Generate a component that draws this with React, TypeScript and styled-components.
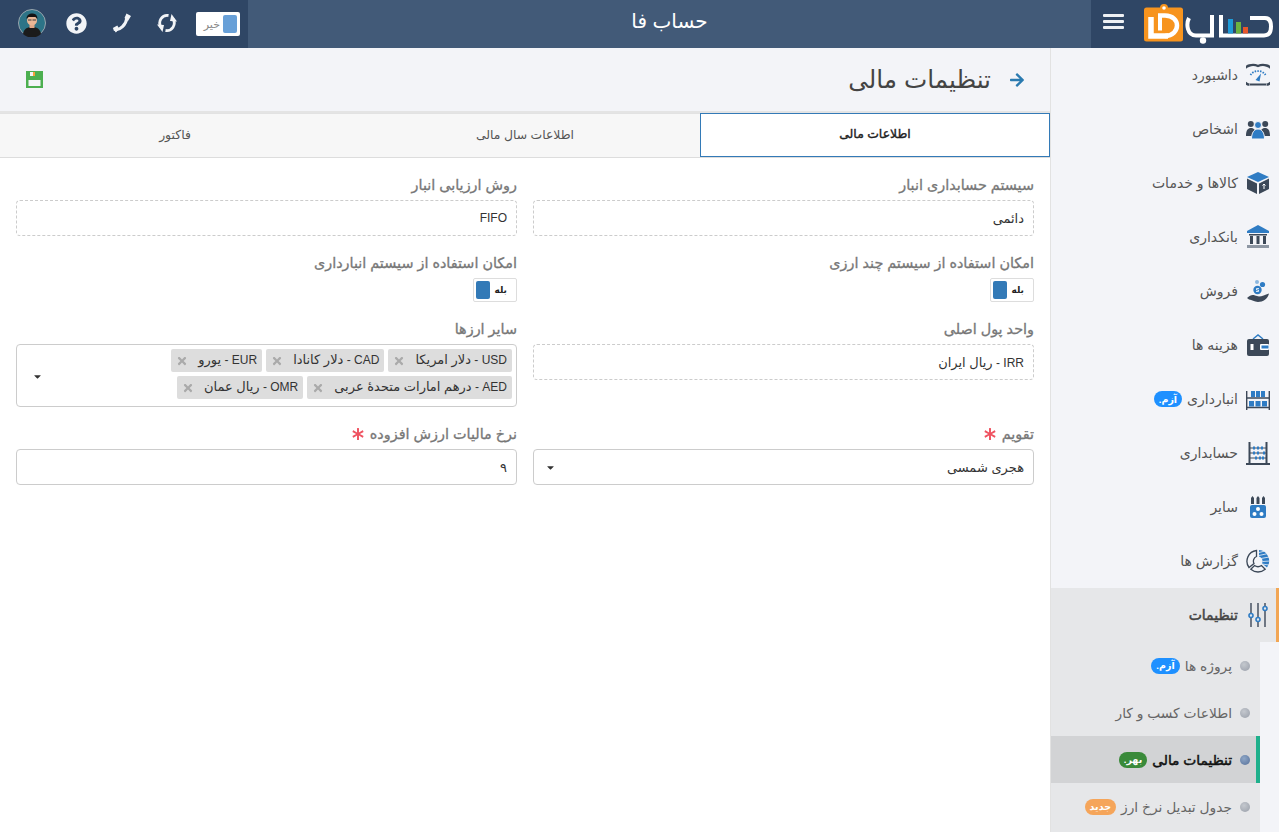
import React from "react";
import styled, { createGlobalStyle } from "styled-components";
import { FaArrowRight, FaAsterisk, FaCaretDown, FaQuestionCircle, FaTimes } from "react-icons/fa";

const Global = createGlobalStyle`
  html, body { margin: 0; padding: 0; background: #fff; overflow: hidden; }
  * { box-sizing: border-box; }
  body { font-family: "Liberation Sans", "DejaVu Sans", sans-serif; font-size: 12px; color: #333; }
`;

const Shell = styled.div`width: 1279px; height: 832px; overflow: hidden; display: flex; flex-direction: column;`;
const TopBar = styled.header`height: 48px; flex: none; display: flex; background: #425a78; color: #fff;`;
const Brand = styled.div`width: 188px; background: #2f4665; display: flex; align-items: center; padding: 0 6px 0 0; gap: 20px;`;
const BarsButton = styled.div`width: 21px; height: 15px; margin-bottom: 5px; display: flex; flex-direction: column; justify-content: space-between;
  & > i { display: block; height: 3px; border-radius: 1px; background: #eef1f4; }`;
const PageName = styled.div`flex: 1; text-align: center; font-size: 20px; line-height: 42px;`;
const Tools = styled.div`width: 248px; background: #2f4665; display: flex; align-items: center; padding-right: 8px; padding-bottom: 2px;`;
const ToolSlot = styled.div`width: 45px; display: flex; align-items: center; justify-content: center; color: #f2f4f7; font-size: 21px;`;
const OffSwitch = styled.div`width: 44px; height: 24px; margin-left: 7px; margin-top: 2px; background: #fff; border-radius: 2px; display: flex; align-items: center; padding: 0 3px; gap: 3px; font-size: 11px; color: #888;
  & > i { width: 14px; height: 18px; background: #68a0d8; border-radius: 2px; flex: none; }`;

const Body = styled.div`flex: 1; display: flex; min-height: 0;`;
const Sidebar = styled.nav`width: 229px; flex: none; background: #f3f4f8; border-left: 1px solid #e2e2e2;`;
const MenuItem = styled.div<{ $open?: boolean }>`height: 54px; display: flex; align-items: center; gap: 8px; padding-right: ${p => (p.$open ? "6px" : "9px")}; color: ${p => (p.$open ? "#444" : "#555")}; font-size: 14px; -webkit-text-stroke: ${p => (p.$open ? "0.5px" : "0")};
  background: ${p => (p.$open ? "#e6e7e9" : "transparent")}; border-right: ${p => (p.$open ? "3px solid #f2a654" : "0 solid transparent")};
  & > svg { width: 24px; height: 24px; flex: none; }`;
const SubMenu = styled.div`width: 209px; margin-right: 19px; background: #e6e7e9; height: 190px;`;
const SubItem = styled.div<{ $active?: boolean }>`height: 47px; display: flex; align-items: center; gap: 8px; padding-right: ${p => (p.$active ? "6px" : "10px")}; font-size: 13.800px; -webkit-text-stroke: ${p => (p.$active ? "0.5px" : "0")}; color: ${p => (p.$active ? "#111" : "#666")}; background: ${p => (p.$active ? "#d2d3d5" : "transparent")}; border-right: ${p => (p.$active ? "4px solid #1fb08c" : "0 solid transparent")};`;
const Dot = styled.i<{ $active?: boolean }>`width: 10px; height: 10px; border-radius: 50%; flex: none; background: radial-gradient(circle at 40% 35%, ${p => (p.$active ? "#8ea6c6, #56709a" : "#c4c8ce, #989ea9")});`;
const Pill = styled.span<{ $tone: string }>`display: inline-flex; align-items: center; justify-content: center; height: 16px; padding: 0 5px; margin-right: -3px; border-radius: 8px; background: ${p => p.$tone}; color: #fff; font-size: 9.500px; font-weight: 700; -webkit-text-stroke: 0;`;

const Main = styled.main`flex: 1; min-width: 0; background: #fff;`;
const PageHead = styled.div`height: 65px; background: #f3f4f8; border-bottom: 2px solid #e4e4e4; display: flex; align-items: center; padding: 0 25px 0 8px; justify-content: space-between;`;
const HeadTitle = styled.h1`margin: 0; display: flex; align-items: center; gap: 18px; font-size: 24.700px; font-weight: 400; color: #444;
  & > svg { color: #2a7ab0; font-size: 16px; }`;
const SaveButton = styled.div`width: 52px; display: flex; justify-content: center;`;
const Tabs = styled.div`display: grid; grid-template-columns: repeat(3, 1fr); height: 45px; border-bottom: 1px solid #ddd; background: #f7f7f7;`;
const Tab = styled.div<{ $active?: boolean }>`display: flex; align-items: center; justify-content: center; padding-bottom: 3px; font-size: 12.400px; -webkit-text-stroke: ${p => (p.$active ? "0.4px" : "0")}; color: ${p => (p.$active ? "#222" : "#555")}; background: ${p => (p.$active ? "#fff" : "transparent")}; border: 1px solid ${p => (p.$active ? "#337ab7" : "#e2e2e2")}; ${p => !p.$active && "border-width: 1px 0 0 0;"}`;
const Form = styled.div`display: grid; grid-template-columns: 1fr 1fr; column-gap: 16px; row-gap: 19px; padding: 19px 16px 0;`;
const Field = styled.div`display: flex; flex-direction: column; gap: 3px; align-items: stretch; min-width: 0;`;
const Label = styled.label`height: 20px; padding-bottom: 4px; font-size: 14.400px; -webkit-text-stroke: 0.3px; color: #777; display: flex; align-items: center; gap: 6px;
  & > svg { color: #ef5361; font-size: 12px; -webkit-text-stroke: 0; }`;
const TextBox = styled.div<{ $dashed?: boolean }>`height: 36px; padding: 0 9px; display: flex; align-items: center; justify-content: space-between; border: 1px ${p => (p.$dashed ? "dashed" : "solid")} #ccc; border-radius: 4px; font-size: 13px; color: #333; background: #fff;`;
const Latin = styled.span`font-size: 12px;`;
const Caret = styled.span`display: flex; color: #333; font-size: 11px; margin-left: 2px; margin-top: 1px;`;
const MultiBox = styled.div`height: 63px; border: 1px solid #ccc; border-radius: 4px; padding: 0 4px 0 13px; display: flex; align-items: center; gap: 8px; background: #fff;`;
const TagWrap = styled.div`flex: 1; display: flex; flex-wrap: wrap; gap: 4px; align-content: flex-start; height: 53px;`;
const Tag = styled.span`height: 23px; display: inline-flex; align-items: center; padding: 0 5px 2px; gap: 10px; background: #ddd; border-radius: 2px; font-size: 13px; color: #333; white-space: nowrap;
  & > svg { color: #aaa; font-size: 12px; margin-top: 2px; }`;
const SwitchRow = styled.div`display: flex;`;
const OnSwitch = styled.div`width: 44px; height: 24px; border: 1px solid #ddd; border-radius: 2px; background: #fff; display: flex; align-items: center; justify-content: space-between; padding: 0 9px 0 2px; font-size: 9px; font-weight: 700; color: #222;
  & > i { width: 14px; height: 18px; background: #337ab7; border-radius: 2px; }`;

const D = "#3c4858", B = "#2f7cc4", BG = "#f3f4f8";
const Gauge = () => <svg viewBox="0 0 24 24"><path d="M3.500 21.500H2A11 10 0 0 1 12 3a11 10 0 0 1 10 18.500h-1.500" fill="none" stroke={D} strokeWidth="2.400" /><path d="M4.500 12A8.500 7.500 0 0 1 19.500 12" fill="none" stroke={B} strokeWidth="1.800" strokeDasharray="1.500 1.200" /><path d="M9.500 17l5.500-6.500-1.500 8z" fill={B} /><rect x="4" y="20.500" width="16" height="2" fill={D} /></svg>;
const People = () => <svg viewBox="0 0 24 24"><circle cx="4.800" cy="7" r="3" fill={D} /><circle cx="19.200" cy="7" r="3" fill={D} /><path d="M0 19c0-6 2-8 5-8s5 2 5 8zM14 19c0-6 2-8 5-8s5 2 5 8z" fill={D} /><circle cx="12" cy="8" r="3.500" fill={B} stroke={BG} /><path d="M5.500 22c0-6 2.500-10 6.500-10s6.500 4 6.500 10z" fill={B} stroke={BG} /></svg>;
const BoxIcon = () => <svg viewBox="0 0 24 24"><path d="M1 6l11-5 11 5-11 5z" fill={B} /><path d="M1 7.500l10 5V23L1 18z" fill={D} /><path d="M23 7.500l-10 5V23l10-5z" fill={D} /><path d="M18 18v-5m-1.500 1.500L18 13l1.500 1.500" stroke="#fff" fill="none" /></svg>;
const Bank = () => <svg viewBox="0 0 24 24"><path d="M12 0l11 6v2H1V6z" fill={B} /><rect x="3" y="9" width="18" height="1.500" fill={D} /><path d="M4 11h3v8H4zM10.500 11h3v8h-3zM17 11h3v8h-3z" fill={D} /><rect x="1" y="20" width="22" height="3" fill="#8d96a3" /></svg>;
const Coins = () => <svg viewBox="0 0 24 24"><circle cx="11.500" cy="11" r="4.200" fill={B} /><path d="M13 9.500h-2.500v1.500h2v1.500H10" fill="none" stroke="#fff" strokeWidth=".800" /><circle cx="16.500" cy="5.500" r="2.600" fill={B} /><circle cx="11" cy="3" r="2" fill="#8cb7e0" /><path d="M1 19c3-2.500 5-3.500 8-2.500l4 1c3 0 6-2 10-3-1 5-6 8.500-11 8.500-4 0-6-2.500-9-2.500z" fill={D} /></svg>;
const Wallet = () => <svg viewBox="0 0 24 24"><path d="M7 6l5-4 5 4" fill="none" stroke={B} strokeWidth="1.500" /><rect x="1" y="6" width="22" height="17" rx="2" fill={D} /><rect x="14" y="11" width="9" height="6" rx="1" fill="#fff" /><rect x="15.500" y="12.500" width="7" height="3" fill={B} /><rect x="4.500" y="11" width="3" height="6" fill="#fff" /></svg>;
const Shelf = () => <svg viewBox="0 0 24 24"><path d="M.700 4v19M23.300 4v19M1 11h22M1 20.500h22" stroke={D} strokeWidth="1.400" /><path d="M5 4h4v6H5zM10 4h4v6h-4zM15 4h4v6h-4zM3 14h5v5.500H3zM9.500 14h5v5.500h-5zM16 14h5v5.500h-5z" fill={B} /></svg>;
const Abacus = () => <svg viewBox="0 0 24 24"><path d="M3.500 1v22M20.500 1v22M0 23h24" stroke={D} strokeWidth="2" /><path d="M4 7h16M4 12h16M4 17h16" stroke={D} /><path d="M7 5.500h2v3H7zM11 5.500h2v3h-2zM15 5.500h2v3h-2zM7 10.500h2v3H7zM11 10.500h2v3h-2zM17 10.500h2v3h-2zM9 15.500h2v3H9zM13 15.500h2v3h-2zM16 15.500h2v3h-2z" fill={B} /></svg>;
const Pens = () => <svg viewBox="0 0 24 24"><path d="M5 9V3l1.500-2L8 3v6zM10.500 9V3L12 1l1.500 2v6zM16 9V3l1.500-2L19 3v6z" fill={D} /><rect x="4" y="10" width="16" height="13" rx="2" fill={B} /><circle cx="12" cy="14" r="2" fill="#fff" /><circle cx="8.500" cy="19" r="2" fill="#fff" /><circle cx="15.500" cy="19" r="2" fill="#fff" /></svg>;
const Pie = () => <svg viewBox="0 0 24 24" fill="none"><path d="M10.500 1.500A10.800 10.800 0 0 0 3 18.500L8 14.500A5 5 0 0 1 10.500 7.500Z" stroke={D} strokeWidth="1.300" /><path d="M4.800 20.300A11 11 0 0 0 19.200 20.300L15.500 16.500A6 6 0 0 1 8.500 16.500Z" stroke={D} strokeWidth="1.300" /><path d="M13 1A11 11 0 0 1 21 18.500L16 14.500A5 5 0 0 0 13 7.500Z" fill={B} /><path d="M13 3.500L19 2M13 6.500L22 4.500M15 9.500L23 8M16.500 12.500L24 12M16 15L23 16" stroke={BG} strokeWidth=".800" /></svg>;
const Sliders = () => <svg viewBox="0 0 24 24" fill="none" stroke={D} strokeWidth="1.400"><path d="M5 0v10M5 15v9M12 0v14M12 19v5M19 0v3M19 8v16" /><circle cx="5" cy="12.500" r="2" stroke={B} strokeWidth="1.600" /><circle cx="12" cy="16.500" r="2" stroke={B} strokeWidth="1.600" /><circle cx="19" cy="5.500" r="2" stroke={B} strokeWidth="1.600" /></svg>;

const Logo = () => (
  <svg width="129" height="40" viewBox="0 0 129 40" style={{ flex: "none", marginBottom: 8, marginTop: 8 }}>
    <circle cx="20" cy="4" r="4" fill="#f7941e" />
    <rect x="0" y="3.500" width="39" height="34" rx="2.500" fill="#f7941e" />
    <circle cx="20" cy="4" r="1.800" fill="#fff" />
    <path d="M7 13v19h17" stroke="#fff" strokeWidth="5.500" fill="none" />
    <path d="M16 11.500v15" stroke="#fff" strokeWidth="4" fill="none" />
    <path d="M14 11.500h7c8 0 12 5 12 10s-4 10.500-12 10.500" stroke="#fff" strokeWidth="4.500" fill="none" />
    <path d="M45 14c-3 6-2 17.500 7 17.500h16V11M77 11v20.500H120q7 0 7-9 0-8.500-6-8.500H106" stroke="#fff" strokeWidth="4" fill="none" />
    <circle cx="59" cy="36.500" r="3.200" fill="#fff" />
    <rect x="84" y="15" width="5" height="14.500" fill="#1e9bd7" />
    <rect x="92" y="18" width="5" height="11.500" fill="#6cb33f" />
    <rect x="99" y="23" width="5" height="6.500" fill="#e8562a" />
  </svg>
);

const SyncIcon = () => (
  <svg width="20" height="20" viewBox="0 0 20 20" fill="none" stroke="#f2f4f7" strokeWidth="2.800">
    <path d="M11.500 2.500A7.500 7.500 0 0 0 4 14" />
    <path d="M8.500 17.500A7.500 7.500 0 0 0 16 6" />
    <path d="M0 11.500l7 .5-1.500 7z M20 8.500l-7-.5 1.500-7z" fill="#f2f4f7" stroke="none" />
  </svg>
);

const PhoneIcon = () => (
  <svg width="20" height="20" viewBox="0 0 20 20" fill="none">
    <path d="M3 16.500c5 1 11-4.500 12-12" stroke="#f2f4f7" strokeWidth="3" strokeLinecap="round" />
    <path d="M.800 15l4.500-2.500 2 3.500-3.500 3.500zM12.500 5l2-4.500 4.500 2.500-3 5z" fill="#f2f4f7" />
  </svg>
);

const SaveIcon = () => (
  <svg width="17" height="17" viewBox="0 0 17 17">
    <rect width="17" height="17" fill="#4caf50" />
    <rect x="2.500" y="9" width="12" height="6" fill="#f3f4f8" />
    <rect x="4" y="1" width="3" height="4" fill="#f3f4f8" />
    <rect x="7" y="1" width="2" height="4" fill="#f6a23c" />
  </svg>
);

const Avatar = () => (
  <svg width="28" height="28" viewBox="0 0 28 28">
    <circle cx="14" cy="14" r="13.500" fill="#2d7487" stroke="#9aa5ad" />
    <path d="M5 25c1-6 5-7 9-7s8 1 9 7a13 13 0 0 1-18 0z" fill="#1b1b1b" />
    <rect x="11.500" y="15" width="5" height="4" fill="#e0a888" />
    <circle cx="14" cy="11.500" r="5" fill="#eab796" />
    <path d="M8.500 10c0-4 3-5.500 5.500-5.500s5.500 1 5.500 5.500l-2-2h-7z" fill="#141414" />
    <path d="M10 11h3.500M14.500 11H18" stroke="#3a3a3a" strokeWidth="1" />
  </svg>
);

const menu: [string, React.ReactNode, React.ReactNode?][] = [
  ["داشبورد", <Gauge />],
  ["اشخاص", <People />],
  ["کالاها و خدمات", <BoxIcon />],
  ["بانکداری", <Bank />],
  ["فروش", <Coins />],
  ["هزینه ها", <Wallet />],
  ["انبارداری", <Shelf />, <Pill $tone="#1e90ff">آزم.</Pill>],
  ["حسابداری", <Abacus />],
  ["سایر", <Pens />],
  ["گزارش ها", <Pie />],
];

const tags = [
  ["USD", "دلار امریکا"],
  ["CAD", "دلار کانادا"],
  ["EUR", "یورو"],
  ["AED", "درهم امارات متحدهٔ عربی"],
  ["OMR", "ریال عمان"],
];

export default function App() {
  return (
    <Shell dir="rtl">
      <Global />
      <TopBar>
        <Brand><Logo /><BarsButton><i /><i /><i /></BarsButton></Brand>
        <PageName>حساب فا</PageName>
        <Tools>
          <OffSwitch><i /><span>خیر</span></OffSwitch>
          <ToolSlot><SyncIcon /></ToolSlot>
          <ToolSlot><PhoneIcon /></ToolSlot>
          <ToolSlot><FaQuestionCircle /></ToolSlot>
          <ToolSlot><Avatar /></ToolSlot>
        </Tools>
      </TopBar>
      <Body>
        <Sidebar>
          {menu.map(([name, icon, pill]) => (
            <MenuItem key={name}>{icon}<span>{name}</span>{pill}</MenuItem>
          ))}
          <MenuItem $open><Sliders /><span>تنظیمات</span></MenuItem>
          <SubMenu>
            <SubItem><Dot /><span>پروژه ها</span><Pill $tone="#1e90ff">آزم.</Pill></SubItem>
            <SubItem><Dot /><span>اطلاعات کسب و کار</span></SubItem>
            <SubItem $active><Dot $active /><span>تنظیمات مالی</span><Pill $tone="#3a8a3a">بهر.</Pill></SubItem>
            <SubItem><Dot /><span>جدول تبدیل نرخ ارز</span><Pill $tone="#f5a55a">جدید</Pill></SubItem>
          </SubMenu>
        </Sidebar>
        <Main>
          <PageHead>
            <HeadTitle><FaArrowRight /><span>تنظیمات مالی</span></HeadTitle>
            <SaveButton><SaveIcon /></SaveButton>
          </PageHead>
          <Tabs>
            <Tab $active>اطلاعات مالی</Tab>
            <Tab>اطلاعات سال مالی</Tab>
            <Tab>فاکتور</Tab>
          </Tabs>
          <Form>
            <Field><Label>سیستم حسابداری انبار</Label><TextBox $dashed>دائمی</TextBox></Field>
            <Field><Label>روش ارزیابی انبار</Label><TextBox $dashed><Latin>FIFO</Latin></TextBox></Field>
            <Field><Label>امکان استفاده از سیستم چند ارزی</Label><SwitchRow><OnSwitch><span>بله</span><i /></OnSwitch></SwitchRow></Field>
            <Field><Label>امکان استفاده از سیستم انبارداری</Label><SwitchRow><OnSwitch><span>بله</span><i /></OnSwitch></SwitchRow></Field>
            <Field><Label>واحد پول اصلی</Label><TextBox $dashed><span><Latin>IRR - </Latin>ریال ایران</span></TextBox></Field>
            <Field>
              <Label>سایر ارزها</Label>
              <MultiBox>
                <TagWrap>{tags.map(([code, name]) => <Tag key={code}><span><Latin>{code} - </Latin>{name}</span><FaTimes /></Tag>)}</TagWrap>
                <Caret><FaCaretDown /></Caret>
              </MultiBox>
            </Field>
            <Field><Label>تقویم<FaAsterisk /></Label><TextBox><span>هجری شمسی</span><Caret><FaCaretDown /></Caret></TextBox></Field>
            <Field><Label>نرخ مالیات ارزش افزوده<FaAsterisk /></Label><TextBox>۹</TextBox></Field>
          </Form>
        </Main>
      </Body>
    </Shell>
  );
}
